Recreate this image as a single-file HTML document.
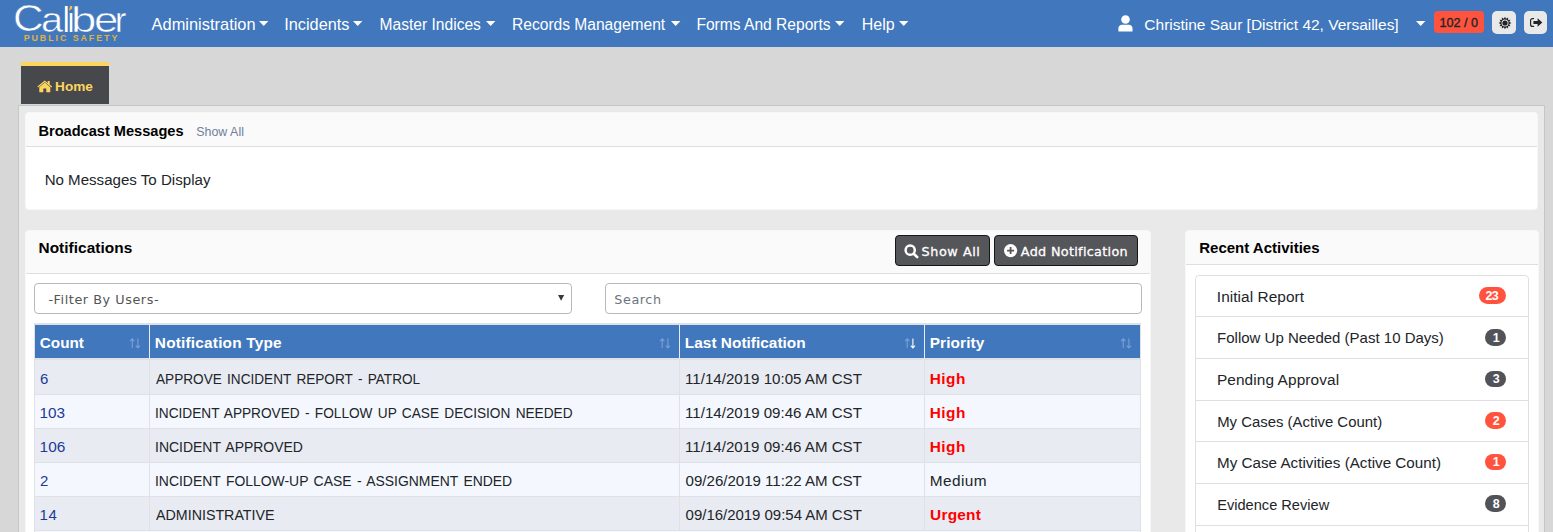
<!DOCTYPE html>
<html lang="en"><head><meta charset="utf-8"><title>Caliber Public Safety - Home</title>
<style>
html,body{margin:0;padding:0}
body{width:1553px;height:532px;overflow:hidden;position:relative;background:#d7d7d7;font-family:"Liberation Sans",sans-serif}
.b{position:absolute;box-sizing:border-box;display:block}
.t{position:absolute;white-space:pre;display:block;margin:0;padding:0}
svg{overflow:visible}
</style></head><body>

<nav>
<div class="b " style="left:0px;top:0px;width:1553px;height:47px;background:#4177bd"></div>
<span class="lg" style="font:35.4px/48px 'Liberation Sans',sans-serif;color:#fff;white-space:pre"><span style="position:absolute;left:13.38px;top:-5.00px;font-size:36.1px;transform:scaleX(1.178);transform-origin:0 0;-webkit-text-stroke:0.55px #4177bd;">C</span><span style="position:absolute;left:40.86px;top:-4.50px;font-size:35.4px;transform:scaleX(1.123);transform-origin:0 0;-webkit-text-stroke:0.55px #4177bd;">a</span><span style="position:absolute;left:63.30px;top:-4.50px;font-size:35.4px;transform:scaleX(0.818);transform-origin:0 0;">l</span><span style="position:absolute;left:67.73px;top:-4.50px;font-size:35.4px;transform:scaleX(0.758);transform-origin:0 0;">i</span><span style="position:absolute;left:70.61px;top:-4.50px;font-size:35.4px;transform:scaleX(1.288);transform-origin:0 0;-webkit-text-stroke:0.55px #4177bd;">b</span><span style="position:absolute;left:93.90px;top:-4.50px;font-size:35.4px;transform:scaleX(1.239);transform-origin:0 0;-webkit-text-stroke:0.55px #4177bd;">e</span><span style="position:absolute;left:115.21px;top:-4.50px;font-size:35.4px;transform:scaleX(0.956);transform-origin:0 0;-webkit-text-stroke:0.4px #4177bd;">r</span></span>
<div class="b " style="left:68.7px;top:3px;width:4.599999999999994px;height:8.3px;background:#4177bd"></div>
<svg class="b" style="left:69px;top:6.4px" width="3.2" height="4.8" viewBox="0 0 3.2 4.8"><path d="M1.1 0H3.2V2.6L0 4.8Z" fill="#f6c433"/></svg>
<span class="t" style="left:23.66px;top:27.80px;font:bold 8.9px/20px 'Liberation Sans',sans-serif;color:#e2b338;letter-spacing:1.930px;">PUBLIC SAFETY</span>
<a class="t" style="left:151.57px;top:14.00px;font:16.4px/20px 'Liberation Sans',sans-serif;color:#fff;letter-spacing:0.015px;">Administration</a>
<svg class="b" style="left:259.2px;top:21px" width="9.4" height="5" viewBox="0 0 9.4 5"><path d="M0 0H9.4L4.7 5Z" fill="#fff"/></svg>
<a class="t" style="left:284.24px;top:14.00px;font:16.3px/20px 'Liberation Sans',sans-serif;color:#fff;letter-spacing:0.009px;">Incidents</a>
<svg class="b" style="left:353.4px;top:21px" width="9.4" height="5" viewBox="0 0 9.4 5"><path d="M0 0H9.4L4.7 5Z" fill="#fff"/></svg>
<a class="t" style="left:379.54px;top:14.50px;font:15.6px/20px 'Liberation Sans',sans-serif;color:#fff;letter-spacing:-0.002px;">Master Indices</a>
<svg class="b" style="left:485.7px;top:21px" width="9.4" height="5" viewBox="0 0 9.4 5"><path d="M0 0H9.4L4.7 5Z" fill="#fff"/></svg>
<a class="t" style="left:512.09px;top:14.50px;font:15.6px/20px 'Liberation Sans',sans-serif;color:#fff;letter-spacing:-0.019px;">Records Management</a>
<svg class="b" style="left:670.9px;top:21px" width="9.4" height="5" viewBox="0 0 9.4 5"><path d="M0 0H9.4L4.7 5Z" fill="#fff"/></svg>
<a class="t" style="left:696.41px;top:14.50px;font:15.6px/20px 'Liberation Sans',sans-serif;color:#fff;letter-spacing:-0.005px;">Forms And Reports</a>
<svg class="b" style="left:835.3px;top:21px" width="9.4" height="5" viewBox="0 0 9.4 5"><path d="M0 0H9.4L4.7 5Z" fill="#fff"/></svg>
<a class="t" style="left:861.75px;top:14.50px;font:16px/20px 'Liberation Sans',sans-serif;color:#fff;letter-spacing:-0.006px;">Help</a>
<svg class="b" style="left:898.9px;top:21px" width="9.4" height="5" viewBox="0 0 9.4 5"><path d="M0 0H9.4L4.7 5Z" fill="#fff"/></svg>
<svg class="b" style="left:1117.5px;top:15.4px" width="15" height="17" viewBox="0 0 15 17"><circle cx="7.5" cy="4.5" r="4.3" fill="#fff"/><path d="M0.4 16.4V13.2C0.4 11 2 9.7 4 9.7H10.8C12.8 9.7 14.5 11 14.5 13.2V16.4Z" fill="#fff"/></svg>
<a class="t" style="left:1144.36px;top:14.50px;font:15.5px/20px 'Liberation Sans',sans-serif;color:#fff;letter-spacing:-0.017px;">Christine Saur [District 42, Versailles]</a>
<svg class="b" style="left:1415.8px;top:21px" width="9.4" height="5" viewBox="0 0 9.4 5"><path d="M0 0H9.4L4.7 5Z" fill="#fff"/></svg>
<div class="b " style="left:1434px;top:11px;width:50px;height:22px;background:#ff533d;border-radius:4px"></div>
<span class="t" style="left:1439.62px;top:12.80px;font:12.6px/20px 'Liberation Sans',sans-serif;color:#212529;letter-spacing:-0.006px;-webkit-text-stroke:0.35px #212529;">102 / 0</span>
<div class="b " style="left:1492px;top:11px;width:24px;height:23px;background:#e9e9e9;border-radius:5px"></div>
<svg class="b" style="left:1504.7px;top:22.7px" width="1" height="1" viewBox="0 0 1 1"><polygon points="0.00,-6.30 1.14,-4.25 3.15,-5.46 3.11,-3.11 5.46,-3.15 4.25,-1.14 6.30,0.00 4.25,1.14 5.46,3.15 3.11,3.11 3.15,5.46 1.14,4.25 0.00,6.30 -1.14,4.25 -3.15,5.46 -3.11,3.11 -5.46,3.15 -4.25,1.14 -6.30,0.00 -4.25,-1.14 -5.46,-3.15 -3.11,-3.11 -3.15,-5.46 -1.14,-4.25" fill="#1f2226"/><circle r="3.5" fill="#e9e9e9"/><circle r="2.6" fill="#1f2226"/></svg>
<div class="b " style="left:1524px;top:11px;width:23px;height:23px;background:#e9e9e9;border-radius:5px"></div>
<svg class="b" style="left:1529.8px;top:18px" width="13" height="9" viewBox="0 0 13 9"><path d="M3.6 0.6H2.6C1.4 0.6 0.6 1.5 0.6 2.6V6.4C0.6 7.5 1.4 8.4 2.6 8.4H3.6" fill="none" stroke="#1f2226" stroke-width="1.2" stroke-linecap="round"/><path d="M3.4 2.9H7.6V0.2L12.3 4.5L7.6 8.8V6.1H3.4Z" fill="#1f2226"/></svg>
</nav>
<header>
<div class="b " style="left:21px;top:62px;width:88px;height:42px;background:#47484c;border-top:4px solid #fcd55f"></div>
<svg class="b" style="left:37px;top:79.7px" width="15.6" height="12.4" viewBox="0 0 15.6 12.4"><path d="M7.8 2.6L2.3 7.2V12.3H6.3V8.6H9.3V12.3H13.3V7.2Z" fill="#fcd55f"/><path d="M0.4 6.6L7.8 0.5L10.7 2.9V0.9H12.7V4.5L15.2 6.6L14.4 7.6L7.8 2.1L1.2 7.6Z" fill="#fcd55f"/></svg>
<a class="t" style="left:55.05px;top:76.50px;font:bold 13.6px/20px 'Liberation Sans',sans-serif;color:#fcd55f;letter-spacing:0.029px;">Home</a>
</header>
<main>
<div class="b " style="left:18px;top:105px;width:1527px;height:435px;background:#e9e9e9;border:1px solid #c6c6c6"></div>
<div class="b " style="left:25px;top:112px;width:1513px;height:98px;background:#fff;border:1px solid #f7f7f7;border-radius:4px"></div>
<div class="b " style="left:26px;top:113px;width:1511px;height:34px;background:#fafafa;border-bottom:1px solid #dfdfdf;border-radius:3px 3px 0 0"></div>
<h3 class="t" style="left:38.49px;top:121.00px;font:bold 14.6px/20px 'Liberation Sans',sans-serif;color:#000;letter-spacing:-0.006px;">Broadcast Messages</h3>
<a class="t" style="left:196.15px;top:122.00px;font:12.4px/20px 'Liberation Sans',sans-serif;color:#70809a;letter-spacing:0.045px;">Show All</a>
<span class="t" style="left:44.63px;top:169.50px;font:15.1px/20px 'Liberation Sans',sans-serif;color:#212529;letter-spacing:-0.001px;">No Messages To Display</span>
<div class="b " style="left:25px;top:230px;width:1126px;height:310px;background:#fff;border:1px solid #f7f7f7;border-radius:4px"></div>
<div class="b " style="left:26px;top:231px;width:1124px;height:43px;background:#fafafa;border-bottom:1px solid #dfdfdf;border-radius:3px 3px 0 0"></div>
<h3 class="t" style="left:38.53px;top:237.50px;font:bold 15.4px/20px 'Liberation Sans',sans-serif;color:#000;letter-spacing:0.046px;">Notifications</h3>
<div class="b " style="left:895px;top:235px;width:95px;height:31px;background:#55565a;border:1px solid #161616;border-radius:4px"></div>
<svg class="b" style="left:904px;top:244px" width="15" height="15" viewBox="0 0 15 15"><circle cx="6.2" cy="6.2" r="4.6" fill="none" stroke="#fff" stroke-width="2.5"/><path d="M10 10L13.2 13.1" stroke="#fff" stroke-width="2.7" stroke-linecap="round"/></svg>
<span class="t" style="left:921.56px;top:241.50px;font:12.8px/20px 'DejaVu Sans',sans-serif;color:#fff;letter-spacing:0.555px;-webkit-text-stroke:0.3px #fff;">Show All</span>
<div class="b " style="left:994px;top:235px;width:144px;height:31px;background:#55565a;border:1px solid #161616;border-radius:4px"></div>
<svg class="b" style="left:1003.6px;top:244.4px" width="13.2" height="13.2" viewBox="0 0 13.2 13.2"><circle cx="6.6" cy="6.6" r="6.6" fill="#fff"/><path d="M6.6 3.1V10.1M3.1 6.6H10.1" stroke="#55565a" stroke-width="1.8"/></svg>
<span class="t" style="left:1020.86px;top:241.50px;font:12.8px/20px 'DejaVu Sans',sans-serif;color:#fff;letter-spacing:0.302px;-webkit-text-stroke:0.3px #fff;">Add Notification</span>
<div class="b " style="left:34px;top:283px;width:538px;height:31px;background:#fff;border:1px solid #b9b9b9;border-radius:4px"></div>
<span class="t" style="left:48.46px;top:290.00px;font:12.8px/20px 'DejaVu Sans',sans-serif;color:#555;letter-spacing:0.551px;">-Filter By Users-</span>
<svg class="b" style="left:557.7px;top:294.6px" width="6.2" height="5.8" viewBox="0 0 6.2 5.8"><path d="M0 0H6.2L3.1 5.8Z" fill="#353a40"/></svg>
<div class="b " style="left:605px;top:283px;width:537px;height:31px;background:#fff;border:1px solid #b9b9b9;border-radius:4px"></div>
<span class="t" style="left:614.32px;top:289.50px;font:12.8px/20px 'DejaVu Sans',sans-serif;color:#6c757d;letter-spacing:0.560px;">Search</span>
<div class="b " style="left:34px;top:323px;width:1107px;height:217px;background:#dee2e6"></div>
<div class="b " style="left:35px;top:324.6px;width:1105px;height:33.39999999999998px;background:#4177bd"></div>
<div class="b " style="left:149px;top:324.6px;width:1px;height:33.39999999999998px;background:#e6edf7"></div>
<div class="b " style="left:679px;top:324.6px;width:1px;height:33.39999999999998px;background:#e6edf7"></div>
<div class="b " style="left:924px;top:324.6px;width:1px;height:33.39999999999998px;background:#e6edf7"></div>
<span class="t" style="left:39.74px;top:332.50px;font:bold 15.3px/20px 'Liberation Sans',sans-serif;color:#fff;letter-spacing:0.005px;">Count</span>
<span class="t" style="left:154.85px;top:332.50px;font:bold 15.4px/20px 'Liberation Sans',sans-serif;color:#fff;letter-spacing:0.194px;">Notification Type</span>
<span class="t" style="left:684.85px;top:332.50px;font:bold 15.4px/20px 'Liberation Sans',sans-serif;color:#fff;letter-spacing:0.017px;">Last Notification</span>
<span class="t" style="left:929.63px;top:332.50px;font:bold 15.4px/20px 'Liberation Sans',sans-serif;color:#fff;letter-spacing:0.125px;">Priority</span>
<svg class="b" style="left:129.5px;top:337.5px" width="12" height="12" viewBox="0 0 12 12" fill="none" stroke="#fff" stroke-width="1.1"><g opacity="0.3"><path d="M2.2 10V0.9M0.1 3L2.2 0.8L4.3 3"/></g><g opacity="0.3"><path d="M7.9 0.6V9.8M5.8 7.7L7.9 9.9L10 7.7"/></g></svg>
<svg class="b" style="left:659.9px;top:337.5px" width="12" height="12" viewBox="0 0 12 12" fill="none" stroke="#fff" stroke-width="1.1"><g opacity="0.3"><path d="M2.2 10V0.9M0.1 3L2.2 0.8L4.3 3"/></g><g opacity="0.3"><path d="M7.9 0.6V9.8M5.8 7.7L7.9 9.9L10 7.7"/></g></svg>
<svg class="b" style="left:904.8px;top:337.5px" width="12" height="12" viewBox="0 0 12 12" fill="none" stroke="#fff" stroke-width="1.1"><g opacity="0.3"><path d="M2.2 10V0.9M0.1 3L2.2 0.8L4.3 3"/></g><g opacity="1"><path d="M7.9 0.6V9.8M5.8 7.7L7.9 9.9L10 7.7"/></g></svg>
<svg class="b" style="left:1121.2px;top:337.5px" width="12" height="12" viewBox="0 0 12 12" fill="none" stroke="#fff" stroke-width="1.1"><g opacity="0.3"><path d="M2.2 10V0.9M0.1 3L2.2 0.8L4.3 3"/></g><g opacity="0.3"><path d="M7.9 0.6V9.8M5.8 7.7L7.9 9.9L10 7.7"/></g></svg>
<div class="b " style="left:35px;top:360px;width:114px;height:34px;background:#e9ebf2"></div>
<div class="b " style="left:150px;top:360px;width:529px;height:34px;background:#e9ebf2"></div>
<div class="b " style="left:680px;top:360px;width:244px;height:34px;background:#e9ebf2"></div>
<div class="b " style="left:925px;top:360px;width:215px;height:34px;background:#e9ebf2"></div>
<a class="t" style="left:40.00px;top:368.50px;font:15px/20px 'Liberation Sans',sans-serif;color:#1c3a99;letter-spacing:0.000px;">6</a>
<span class="t" style="left:155.90px;top:368.50px;font:15.4px/20px 'Liberation Sans',sans-serif;color:#212529;letter-spacing:0.000px;word-spacing:1.7px;transform:scaleX(0.8842);transform-origin:0 0;">APPROVE INCIDENT REPORT - PATROL</span>
<span class="t" style="left:685.07px;top:368.50px;font:15.1px/20px 'Liberation Sans',sans-serif;color:#212529;letter-spacing:0.003px;">11/14/2019 10:05 AM CST</span>
<span class="t" style="left:929.82px;top:368.50px;font:bold 15.4px/20px 'Liberation Sans',sans-serif;color:#fe0000;letter-spacing:0.446px;">High</span>
<div class="b " style="left:35px;top:395px;width:114px;height:33px;background:#f4f8fe"></div>
<div class="b " style="left:150px;top:395px;width:529px;height:33px;background:#f4f8fe"></div>
<div class="b " style="left:680px;top:395px;width:244px;height:33px;background:#f4f8fe"></div>
<div class="b " style="left:925px;top:395px;width:215px;height:33px;background:#f4f8fe"></div>
<a class="t" style="left:39.56px;top:402.50px;font:15.3px/20px 'Liberation Sans',sans-serif;color:#1c3a99;letter-spacing:0.009px;">103</a>
<span class="t" style="left:154.98px;top:402.50px;font:15.4px/20px 'Liberation Sans',sans-serif;color:#212529;letter-spacing:0.000px;word-spacing:1.7px;transform:scaleX(0.8873);transform-origin:0 0;">INCIDENT APPROVED - FOLLOW UP CASE DECISION NEEDED</span>
<span class="t" style="left:685.08px;top:402.50px;font:15.1px/20px 'Liberation Sans',sans-serif;color:#212529;letter-spacing:0.003px;">11/14/2019 09:46 AM CST</span>
<span class="t" style="left:929.82px;top:402.50px;font:bold 15.4px/20px 'Liberation Sans',sans-serif;color:#fe0000;letter-spacing:0.442px;">High</span>
<div class="b " style="left:35px;top:429px;width:114px;height:33px;background:#e9ebf2"></div>
<div class="b " style="left:150px;top:429px;width:529px;height:33px;background:#e9ebf2"></div>
<div class="b " style="left:680px;top:429px;width:244px;height:33px;background:#e9ebf2"></div>
<div class="b " style="left:925px;top:429px;width:215px;height:33px;background:#e9ebf2"></div>
<a class="t" style="left:39.59px;top:436.50px;font:15.4px/20px 'Liberation Sans',sans-serif;color:#1c3a99;letter-spacing:0.030px;">106</a>
<span class="t" style="left:155.11px;top:436.50px;font:15.4px/20px 'Liberation Sans',sans-serif;color:#212529;letter-spacing:0.000px;word-spacing:1.7px;transform:scaleX(0.9070);transform-origin:0 0;">INCIDENT APPROVED</span>
<span class="t" style="left:685.07px;top:436.50px;font:15.1px/20px 'Liberation Sans',sans-serif;color:#212529;letter-spacing:0.003px;">11/14/2019 09:46 AM CST</span>
<span class="t" style="left:929.82px;top:436.50px;font:bold 15.4px/20px 'Liberation Sans',sans-serif;color:#fe0000;letter-spacing:0.446px;">High</span>
<div class="b " style="left:35px;top:463px;width:114px;height:33px;background:#f4f8fe"></div>
<div class="b " style="left:150px;top:463px;width:529px;height:33px;background:#f4f8fe"></div>
<div class="b " style="left:680px;top:463px;width:244px;height:33px;background:#f4f8fe"></div>
<div class="b " style="left:925px;top:463px;width:215px;height:33px;background:#f4f8fe"></div>
<a class="t" style="left:39.92px;top:470.50px;font:15px/20px 'Liberation Sans',sans-serif;color:#1c3a99;letter-spacing:0.000px;">2</a>
<span class="t" style="left:154.93px;top:470.50px;font:15.4px/20px 'Liberation Sans',sans-serif;color:#212529;letter-spacing:0.000px;word-spacing:1.7px;transform:scaleX(0.9048);transform-origin:0 0;">INCIDENT FOLLOW-UP CASE - ASSIGNMENT ENDED</span>
<span class="t" style="left:685.62px;top:470.50px;font:15.1px/20px 'Liberation Sans',sans-serif;color:#212529;letter-spacing:-0.025px;">09/26/2019 11:22 AM CST</span>
<span class="t" style="left:929.70px;top:470.50px;font:15.4px/20px 'Liberation Sans',sans-serif;color:#212529;letter-spacing:0.423px;">Medium</span>
<div class="b " style="left:35px;top:497px;width:114px;height:33px;background:#e9ebf2"></div>
<div class="b " style="left:150px;top:497px;width:529px;height:33px;background:#e9ebf2"></div>
<div class="b " style="left:680px;top:497px;width:244px;height:33px;background:#e9ebf2"></div>
<div class="b " style="left:925px;top:497px;width:215px;height:33px;background:#e9ebf2"></div>
<a class="t" style="left:39.54px;top:504.50px;font:15px/20px 'Liberation Sans',sans-serif;color:#1c3a99;letter-spacing:0.511px;">14</a>
<span class="t" style="left:155.62px;top:504.50px;font:15.4px/20px 'Liberation Sans',sans-serif;color:#212529;letter-spacing:0.000px;word-spacing:1.7px;transform:scaleX(0.9261);transform-origin:0 0;">ADMINISTRATIVE</span>
<span class="t" style="left:685.62px;top:504.50px;font:15px/20px 'Liberation Sans',sans-serif;color:#212529;letter-spacing:-0.027px;">09/16/2019 09:54 AM CST</span>
<span class="t" style="left:930.09px;top:504.50px;font:bold 15.4px/20px 'Liberation Sans',sans-serif;color:#fe0000;letter-spacing:0.224px;">Urgent</span>
<div class="b " style="left:35px;top:531px;width:1105px;height:9px;background:#f4f8fe"></div>
<div class="b " style="left:1185px;top:230px;width:354px;height:310px;background:#fff;border:1px solid #f7f7f7;border-radius:4px"></div>
<div class="b " style="left:1186px;top:231px;width:352px;height:34px;background:#fafafa;border-bottom:1px solid #dfdfdf;border-radius:3px 3px 0 0"></div>
<h3 class="t" style="left:1199.26px;top:237.50px;font:bold 15px/20px 'Liberation Sans',sans-serif;color:#000;letter-spacing:-0.001px;">Recent Activities</h3>
<div class="b " style="left:1195px;top:274.5px;width:334px;height:270.5px;border:1px solid #dfdfdf;border-radius:4px;background:#fff"></div>
<a class="t" style="left:1216.84px;top:286.80px;font:15.4px/20px 'Liberation Sans',sans-serif;color:#212529;letter-spacing:0.059px;">Initial Report</a>
<div class="b " style="left:1478.7px;top:287.3px;width:27.700000000000045px;height:16.80000000000001px;background:#ff533d;border-radius:9px"></div>
<span class="t" style="left:1485.60px;top:285.90px;font:bold 12.5px/20px 'Liberation Sans',sans-serif;color:#fff;letter-spacing:-0.677px;">23</span>
<div class="b " style="left:1196px;top:316.0px;width:332px;height:1.0px;background:#dfdfdf"></div>
<a class="t" style="left:1217.06px;top:328.40px;font:15px/20px 'Liberation Sans',sans-serif;color:#212529;letter-spacing:-0.000px;">Follow Up Needed (Past 10 Days)</a>
<div class="b " style="left:1485px;top:328.90000000000003px;width:21.40000000000009px;height:16.80000000000001px;background:#525358;border-radius:9px"></div>
<span class="t" style="left:1492.73px;top:327.50px;font:bold 12.5px/20px 'Liberation Sans',sans-serif;color:#fff;letter-spacing:0.000px;">1</span>
<div class="b " style="left:1196px;top:357.5px;width:332px;height:1.0px;background:#dfdfdf"></div>
<a class="t" style="left:1216.88px;top:370.00px;font:15.4px/20px 'Liberation Sans',sans-serif;color:#212529;letter-spacing:0.103px;">Pending Approval</a>
<div class="b " style="left:1485px;top:370.5px;width:21.40000000000009px;height:16.80000000000001px;background:#525358;border-radius:9px"></div>
<span class="t" style="left:1492.73px;top:369.10px;font:bold 12.5px/20px 'Liberation Sans',sans-serif;color:#fff;letter-spacing:0.000px;">3</span>
<div class="b " style="left:1196px;top:399.5px;width:332px;height:1.0px;background:#dfdfdf"></div>
<a class="t" style="left:1217.13px;top:412.10px;font:14.9px/20px 'Liberation Sans',sans-serif;color:#212529;letter-spacing:0.016px;">My Cases (Active Count)</a>
<div class="b " style="left:1485px;top:412.1px;width:21.40000000000009px;height:16.80000000000001px;background:#ff533d;border-radius:9px"></div>
<span class="t" style="left:1492.73px;top:410.70px;font:bold 12.5px/20px 'Liberation Sans',sans-serif;color:#fff;letter-spacing:0.000px;">2</span>
<div class="b " style="left:1196px;top:441.0px;width:332px;height:1.0px;background:#dfdfdf"></div>
<a class="t" style="left:1217.05px;top:453.20px;font:15.2px/20px 'Liberation Sans',sans-serif;color:#212529;letter-spacing:0.009px;">My Case Activities (Active Count)</a>
<div class="b " style="left:1485px;top:453.70000000000005px;width:21.40000000000009px;height:16.80000000000001px;background:#ff533d;border-radius:9px"></div>
<span class="t" style="left:1492.73px;top:452.30px;font:bold 12.5px/20px 'Liberation Sans',sans-serif;color:#fff;letter-spacing:0.000px;">1</span>
<div class="b " style="left:1196px;top:482.5px;width:332px;height:1.0px;background:#dfdfdf"></div>
<a class="t" style="left:1217.18px;top:495.30px;font:14.6px/20px 'Liberation Sans',sans-serif;color:#212529;letter-spacing:0.007px;">Evidence Review</a>
<div class="b " style="left:1485px;top:495.3px;width:21.40000000000009px;height:16.80000000000001px;background:#525358;border-radius:9px"></div>
<span class="t" style="left:1492.73px;top:493.90px;font:bold 12.5px/20px 'Liberation Sans',sans-serif;color:#fff;letter-spacing:0.000px;">8</span>
<div class="b " style="left:1196px;top:524.5px;width:332px;height:1.0px;background:#dfdfdf"></div>
</main>
</body></html>
